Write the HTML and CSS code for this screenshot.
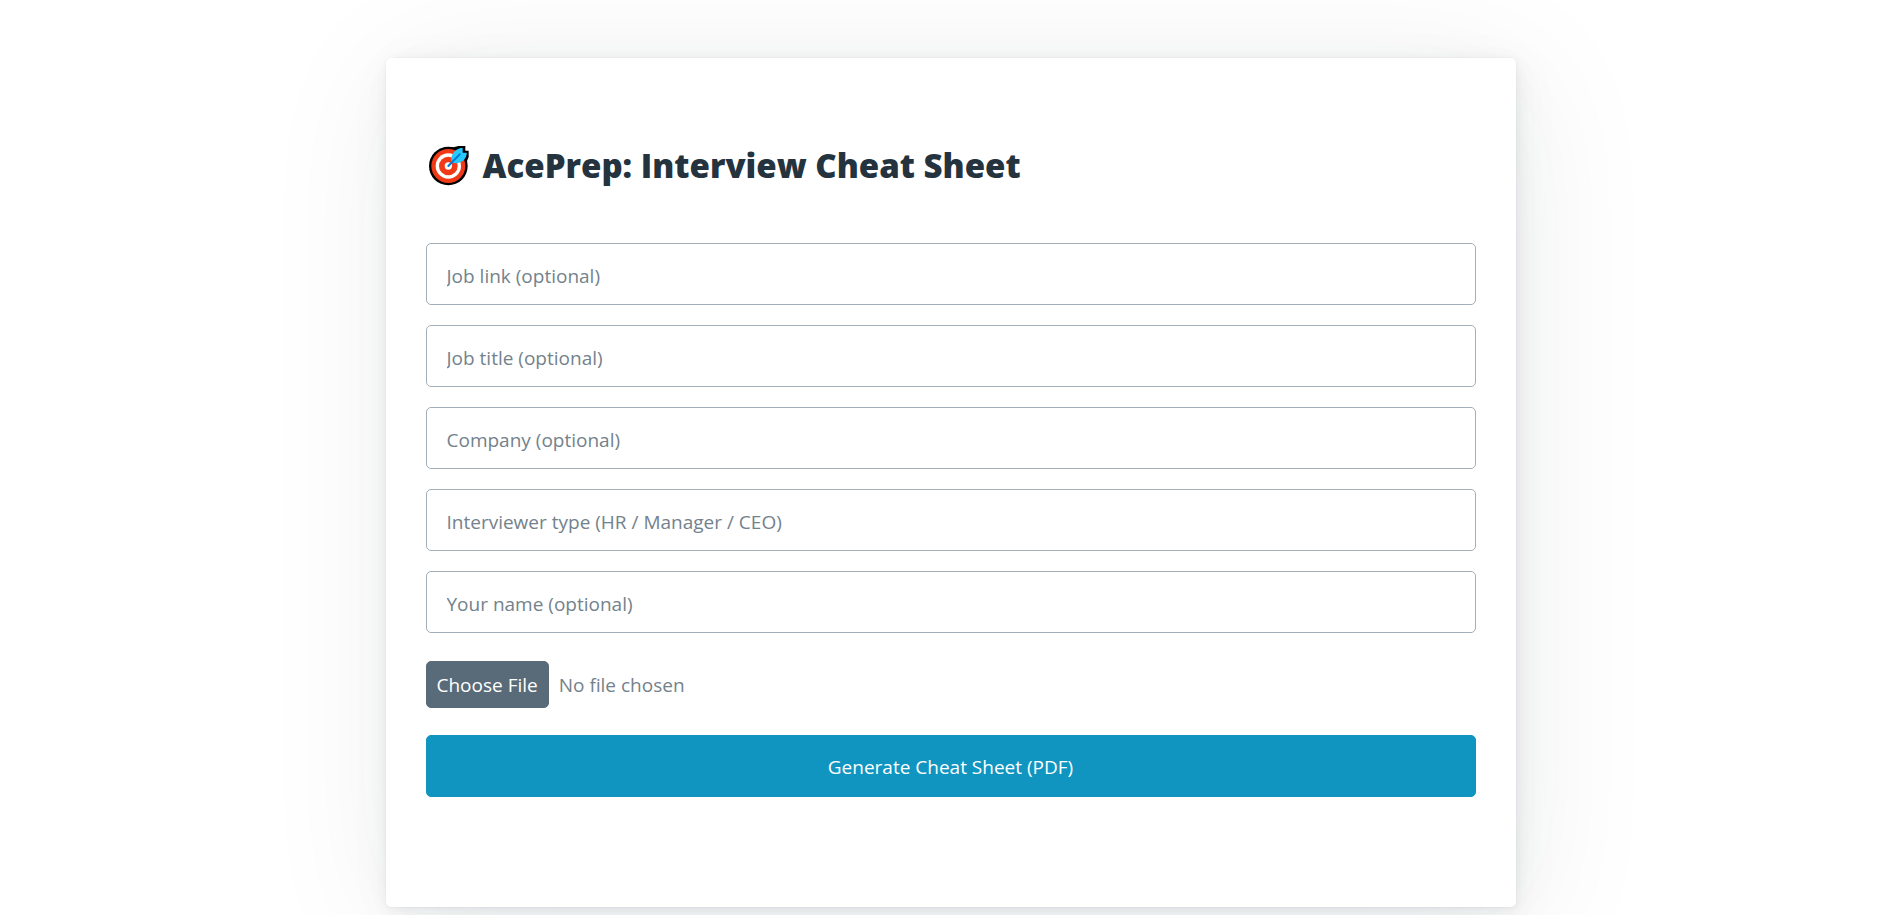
FILE: index.html
```html
<!DOCTYPE html>
<html lang="en">
<head>
  <meta charset="utf-8">
  <meta name="viewport" content="width=device-width, initial-scale=1">
  <title>AcePrep: Interview Cheat Sheet</title>
  <link rel="stylesheet" href="styles.css">
</head>
<body>
  <main class="container">
    <article class="card">
      <h1 class="title">
        <svg class="title-icon" viewBox="27 33 120 120" aria-hidden="true">
          <circle cx="85" cy="93" r="58" fill="#000"/>
          <path d="M92 39 L115 33 H136 V47 H146 V66 L136 90 L112 94 Z" fill="#000"/>
          <circle cx="85" cy="93" r="51" fill="#f03a17"/>
          <circle cx="85" cy="93" r="38" fill="#fff"/>
          <circle cx="85" cy="93" r="28" fill="#f03a17"/>
          <circle cx="85" cy="93" r="11" fill="#fff"/>
          <path d="M95 82 C91 65 98 52 110 44 C117 40 123 38 128 39 V53 H140 C141 62 135 73 127 79 C117 86 106 86 95 82 Z" fill="#26c9fc"/>
          <path d="M85 93 L119 58" stroke="#0078d7" stroke-width="6" stroke-linecap="round"/>
        </svg>
        <span>AcePrep: Interview Cheat Sheet</span>
      </h1>
      <form class="form">
        <input class="field" type="url" name="job_link" placeholder="Job link (optional)" aria-label="Job link">
        <input class="field" type="text" name="job_title" placeholder="Job title (optional)" aria-label="Job title">
        <input class="field" type="text" name="company" placeholder="Company (optional)" aria-label="Company">
        <input class="field" type="text" name="interviewer" placeholder="Interviewer type (HR / Manager / CEO)" aria-label="Interviewer type">
        <input class="field" type="text" name="name" placeholder="Your name (optional)" aria-label="Your name">
        <input class="file" type="file" name="resume" aria-label="Resume file">
        <button class="submit" type="submit">Generate Cheat Sheet (PDF)</button>
      </form>
    </article>
  </main>
</body>
</html>
```
FILE: styles.css
```css
*,
*::before,
*::after {
  box-sizing: border-box;
}

body {
  min-height: 100vh;
  margin: 0;
  background: #fff;
  color: #415462;
  font-family: "Segoe UI", "Open Sans", "Noto Sans", sans-serif;
  font-size: 19px;
  line-height: 30px;
}

.container {
  max-width: 1130px;
  margin: 0 auto;
  padding: 58px 0 0;
}

.card {
  padding: 83px 40px 110px;
  border-radius: 5px;
  background: #fff;
  box-shadow:
    0 1px 3px rgba(27, 40, 50, 0.017),
    1px 1px 8px rgba(27, 40, 50, 0.024),
    1px 3px 15px rgba(27, 40, 50, 0.03),
    2px 5px 27px rgba(27, 40, 50, 0.036),
    4px 8px 50px rgba(27, 40, 50, 0.043),
    8px 16px 140px rgba(27, 40, 50, 0.075),
    0 0 0 1px rgba(27, 40, 50, 0.015);
}

.title {
  display: flex;
  align-items: center;
  gap: 14px;
  margin: 0 0 52px;
  padding-left: 3px;
  color: #24333e;
  font-size: 33px;
  font-weight: 800;
  line-height: 50px;
}

.title-icon {
  flex: none;
  width: 40px;
  height: 40px;
}

.form {
  display: flex;
  flex-direction: column;
  gap: 20px;
}

.field {
  width: 100%;
  height: 62px;
  padding: 17px 20px 13px;
  border: 1px solid #a2afb9;
  border-radius: 5px;
  background: #fff;
  color: #415462;
  font: inherit;
}

.field::placeholder {
  color: #73828c;
  opacity: 1;
}

.file {
  width: 100%;
  margin: 8px 0 7px;
  padding: 0;
  color: #73828c;
  font: inherit;
}

.file::file-selector-button {
  height: 47px;
  margin: 0 10px 0 0;
  padding: 5px 10px;
  border: 1px solid #596b78;
  border-radius: 5px;
  background: #596b78;
  color: #fff;
  font: inherit;
  cursor: pointer;
}

.submit {
  width: 100%;
  height: 62px;
  padding: 16px 20px 14px;
  border: 1px solid #1095c1;
  border-radius: 5px;
  background: #1095c1;
  color: #fff;
  font: inherit;
  cursor: pointer;
}
```
